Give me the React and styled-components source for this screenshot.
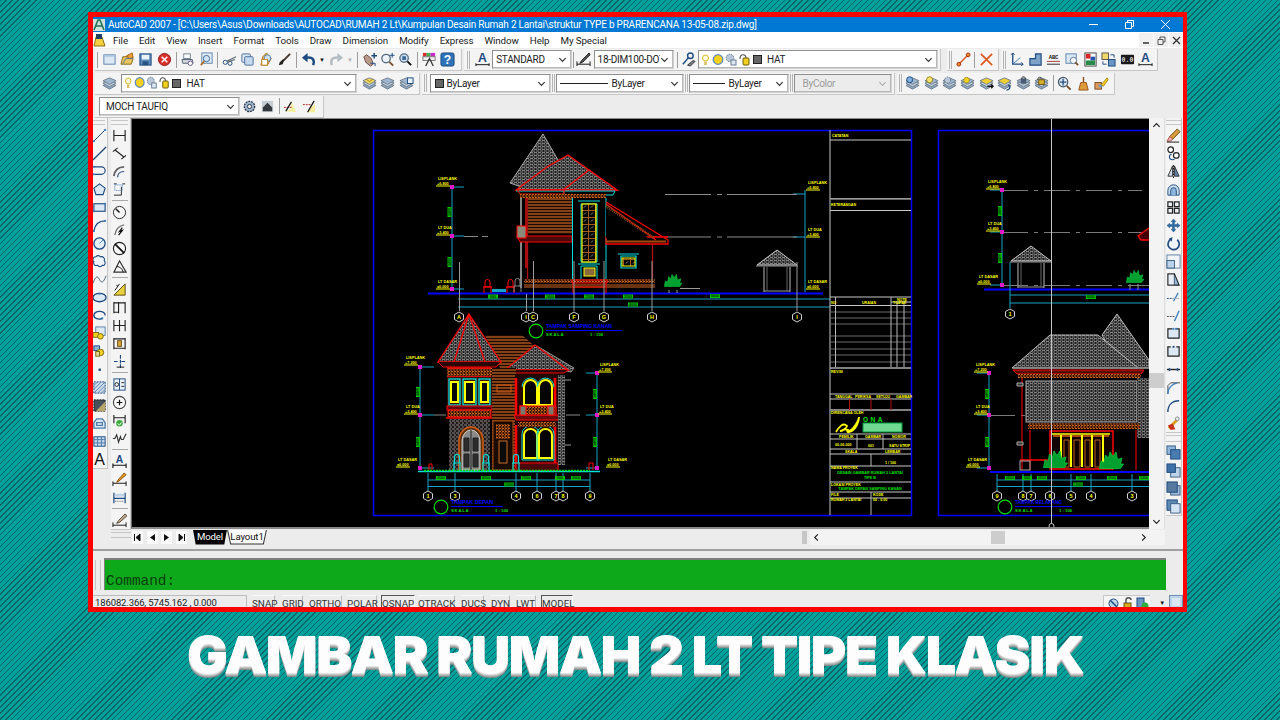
import React from 'react';
import styled, { createGlobalStyle } from 'styled-components';

const GlobalStyle = createGlobalStyle`
  html, body {
    margin: 0;
    padding: 0;
    width: 1280px;
    height: 720px;
    overflow: hidden;
    font-family: Roboto, "Liberation Sans", sans-serif;
  }
  #root {
    width: 1280px;
    height: 720px;
  }
`;

const Page = styled.div`
  box-sizing: border-box;
  width: 1280px;
  height: 720px;
  padding: 12px 0 0 88px;
  background-color: #00a19b;
  background-image: repeating-linear-gradient(
    135deg,
    #0f6568 0,
    #0f6568 1px,
    #00a19b 1px,
    #00a19b 4.2px
  );
  overflow: hidden;
`;
const Window = styled.div`
  box-sizing: border-box;
  width: 1099px;
  height: 600px;
  border: solid #ff0000;
  border-width: 5px 4px 5px 5px;
  background: #ececec;
  display: flex;
  flex-direction: column;
  overflow: hidden;
`;
const Headline = styled.h1`
  margin: 13px 0 0 99px;
  font-family: Inter, "Liberation Sans", sans-serif;
  font-size: 51px;
  line-height: 60px;
  font-weight: 900;
  letter-spacing: -1.5px;
  color: #fdfdfd;
  white-space: nowrap;
  transform: scaleX(1.065);
  transform-origin: left center;
  text-shadow: 0 1px 0 #e2e2e2, 0 2px 0 #c4c4c4, 0 3px 0 #a8a8a8, 0 4px 1px #8e8e8e;
`;

const TitleBar = styled.div`
  height: 15px;
  flex: none;
  background: #0078d4;
  display: flex;
  align-items: center;
  color: #fff;
  font-size: 10px;
  letter-spacing: -0.22px;
  white-space: nowrap;
`;
const TitleText = styled.span`
  margin-left: 3px;
  flex: 1;
`;
const WinControls = styled.div`
  display: flex;
  width: 95px;
  justify-content: space-between;
  padding-right: 12px;
  box-sizing: border-box;
`;
const MenuBar = styled.div`
  height: 16px;
  flex: none;
  background: #fff;
  display: flex;
  align-items: center;
  font-size: 9.8px;
  letter-spacing: -0.1px;
  color: #1a1a1a;
`;
const MenuItems = styled.div`
  display: flex;
  gap: 11px;
  margin-left: 7px;
  flex: 1;
`;
const MdiButtons = styled.div`
  display: flex;
  gap: 1px;
`;
const MdiButton = styled.div`
  width: 14px;
  height: 14px;
  background: #f0f0f0;
  display: flex;
  align-items: center;
  justify-content: center;
`;

const ToolRow = styled.div`
  height: ${(p) => p.$h ?? 23}px;
  flex: none;
  display: flex;
  align-items: center;
  gap: 2px;
  padding-left: 2px;
`;
const ToolGroup = styled.div`
  height: 21px;
  display: flex;
  align-items: center;
  padding: 0 ${(p) => p.$pr ?? 4}px 0 ${(p) => p.$pl ?? 4}px;
  background: #f4f4f4;
  border-right: 1px solid #c6c6c6;
  border-bottom: 1px solid #c6c6c6;
  margin-left: ${(p) => p.$ml ?? 0}px;
`;
const Handle = styled.div`
  width: 3px;
  height: 18px;
  margin: 0 ${(p) => p.$m ?? 2}px;
  flex: none;
  border-left: 1px solid #b4b4b4;
  border-right: 1px solid #b4b4b4;
  box-sizing: border-box;
`;
const Slot = styled.div`
  width: 18.4px;
  height: 18px;
  flex: none;
  display: flex;
  align-items: center;
  justify-content: center;
`;
const Glyph = styled.svg`
  width: ${(p) => p.$w ?? p.$s ?? 15}px;
  height: ${(p) => p.$s ?? 15}px;
  display: block;
  flex: none;
`;
const Sep = styled.div`
  width: 1px;
  height: 16px;
  margin: 0 ${(p) => p.$m ?? 2}px;
  flex: none;
  background: #9c9c9c;
`;
const DropSlot = styled.div`
  width: 9.6px;
  height: 18px;
  flex: none;
  display: flex;
  align-items: center;
  justify-content: center;
  color: ${(p) => (p.$off ? '#b0b0b0' : '#111')};
  font-size: 6px;
`;
const ComboBox = styled.div`
  box-sizing: border-box;
  width: ${(p) => p.$w}px;
  height: 19px;
  flex: none;
  margin: 0 ${(p) => p.$m ?? 0}px;
  display: flex;
  align-items: center;
  padding: 0 4px 0 3px;
  font-size: 10px;
  letter-spacing: -0.3px;
  color: ${(p) => (p.$off ? '#9a9a9a' : '#222')};
  background: ${(p) => (p.$off ? '#ececec' : '#fff')};
  border: 1px solid #d2d2d2;
  border-top: 1px solid #8e8e8e;
  border-left: 1px solid #8e8e8e;
  box-shadow: inset -1px -1px 0 #b8b8b8;
  overflow: hidden;
  white-space: nowrap;
`;
const ComboLabel = styled.span`
  flex: 1;
  overflow: hidden;
  margin-left: ${(p) => p.$ml ?? 0}px;
`;
const LineSample = styled.span`
  display: block;
  width: ${(p) => p.$w}px;
  height: 1px;
  flex: none;
  margin-right: 4px;
  background: #222;
`;
const Swatch = styled.span`
  width: 7px;
  height: 7px;
  flex: none;
  margin: 0 3px 0 1px;
  background: #666;
  border: 1px solid #222;
`;

const Workspace = styled.div`
  height: 428px;
  flex: none;
  display: flex;
  align-items: stretch;
`;
const DockColumn = styled.div`
  width: ${(p) => p.$w}px;
  flex: none;
  display: flex;
  flex-direction: column;
  margin-right: ${(p) => p.$mr ?? 0}px;
  margin-left: ${(p) => p.$ml ?? 0}px;
`;
const VertGroup = styled.div`
  display: flex;
  flex-direction: column;
  align-items: center;
  box-sizing: border-box;
  padding-right: ${(p) => p.$pr ?? 0}px;
  background: #f4f4f4;
  border-right: 1px solid #c6c6c6;
  border-bottom: 1px solid #c6c6c6;
`;
const VertHandle = styled.div`
  width: 100%;
  height: ${(p) => p.$h ?? 7}px;
  flex: none;
  box-sizing: border-box;
  margin-top: 1px;
  border-top: 1px solid #b4b4b4;
  border-bottom: 1px solid #b4b4b4;
  transform: scaleY(0.7);
`;
const VertSlot = styled.div`
  height: 18px;
  flex: none;
  display: flex;
  align-items: center;
  justify-content: center;
`;
const VertSep = styled.div`
  width: 16px;
  height: 1px;
  margin: 2px 0;
  flex: none;
  background: #a8a8a8;
`;
const Center = styled.div`
  width: 1034px;
  flex: none;
  display: flex;
  flex-direction: column;
`;
const ViewRow = styled.div`
  height: 411px;
  flex: none;
  display: flex;
`;
const Canvas = styled.div`
  width: 1018px;
  flex: none;
  box-sizing: border-box;
  background: #000;
  border-top: 1px solid #8a8a8a;
  border-bottom: 2px solid #8a8a8a;
  border-left: 1px solid #6a6a6a;
  overflow: hidden;
`;
const DrawingSvg = styled.svg`
  display: block;
`;
const VScroll = styled.div`
  width: 16px;
  flex: none;
  background: #f3f3f3;
  display: flex;
  flex-direction: column;
  align-items: center;
  justify-content: space-between;
  padding: 3px 0;
  box-sizing: border-box;
  border-right: 1px solid #dedede;
`;
const VThumbWrap = styled.div`
  flex: 1;
  width: 100%;
  display: flex;
  flex-direction: column;
  padding-top: 243px;
`;
const VThumb = styled.div`
  width: 100%;
  height: 15px;
  background: #cdcdcd;
`;
const TabRow = styled.div`
  height: 16px;
  flex: none;
  display: flex;
  align-items: center;
  font-size: 10px;
  padding-left: 1px;
`;
const NavBtn = styled.div`
  width: 11px;
  height: 13px;
  margin-right: 3.5px;
  flex: none;
  display: flex;
  align-items: center;
  justify-content: center;
  background: #fbfbfb;
`;
const Tab = styled.div`
  height: 15px;
  width: ${(p) => p.$w}px;
  margin-left: ${(p) => p.$ml ?? 0}px;
  flex: none;
  display: flex;
  justify-content: center;
  background: ${(p) => (p.$on ? '#000' : '#333')};
  clip-path: polygon(0 0, 100% 0, 92% 100%, 8% 100%);
`;
const TabFace = styled.div`
  flex: 1;
  height: 14px;
  margin: 0 1px;
  display: flex;
  align-items: center;
  justify-content: center;
  font-size: 9.6px;
  letter-spacing: -0.1px;
  background: ${(p) => (p.$on ? '#000' : '#fafafa')};
  color: ${(p) => (p.$on ? '#fff' : '#111')};
  clip-path: polygon(0 0, 100% 0, 92% 100%, 8% 100%);
`;
const HScroll = styled.div`
  margin-left: auto;
  width: 363px;
  height: 15px;
  display: flex;
  align-items: center;
  flex: none;
`;
const HGrip = styled.div`
  width: 5px;
  height: 13px;
  flex: none;
  margin-right: 3px;
  background: #c6c6c6;
`;
const HTrack = styled.div`
  flex: 1;
  height: 15px;
  background: #f3f3f3;
  display: flex;
  align-items: center;
  padding: 0 17px 0 2px;
`;
const HThumb = styled.div`
  width: 14px;
  height: 13px;
  margin: 0 auto 0 170px;
  background: #cdcdcd;
`;
const CommandPanel = styled.div`
  flex: none;
  height: 45px;
  margin-top: 3px;
  box-sizing: border-box;
  border-top: 2px solid #a0a0a0;
  display: flex;
  align-items: flex-end;
  padding: 0 17px 4px 2px;
`;
const CommandGrip = styled.div`
  width: 4px;
  height: 30px;
  flex: none;
  margin-right: 3px;
  border-left: 1px solid #c4c4c4;
  border-right: 1px solid #c4c4c4;
`;
const CommandArea = styled.div`
  flex: 1;
  height: 32px;
  box-sizing: border-box;
  background-color: #0ea91b;
  border-top: 2px solid #7f7f7f;
  border-left: 1px solid #7f7f7f;
  padding-left: 1px;
  display: flex;
  align-items: flex-end;
  font-family: "Liberation Mono", monospace;
  font-size: 14.4px;
  line-height: 17px;
  color: #0a3d10;
`;
const StatusBar = styled.div`
  height: 13px;
  flex: none;
  display: flex;
  align-items: flex-start;
  padding-top: 1px;
  box-sizing: border-box;
  font-size: 9.8px;
  color: #222;
  white-space: nowrap;
  overflow: hidden;
`;
const Coords = styled.div`
  width: 154px;
  height: 14px;
  flex: none;
  box-sizing: border-box;
  padding-left: 2px;
  margin-right: 5px;
  font-size: 9.5px;
  letter-spacing: -0.12px;
  line-height: 14px;
  border-right: 1px solid #bcbcbc;
  border-top: 1px solid #bcbcbc;
`;
const StatusBtn = styled.div`
  width: ${(p) => p.$w}px;
  margin-right: ${(p) => p.$mr}px;
  height: 14px;
  flex: none;
  text-align: center;
  line-height: 15px;
  box-sizing: border-box;
  color: #333;
  border-top: ${(p) => (p.$on ? '1px solid #555' : '1px solid #f8f8f8')};
  border-left: ${(p) => (p.$on ? '1px solid #555' : 'none')};
  border-right: 1px solid ${(p) => (p.$on ? '#fff' : '#bcbcbc')};
`;
const Tray = styled.div`
  margin-left: auto;
  display: flex;
  align-items: center;
  gap: 2px;
  height: 14px;
`;
const TrayIcons = styled.div`
  display: flex;
  gap: 1.5px;
  padding: 1px 1px 0 3px;
  background: #f4f4f4;
  border-top: 1px solid #c6c6c6;
  border-left: 1px solid #c6c6c6;
  margin-right: 5px;
`;

// colours used all over the small toolbar glyphs
const N = '#1d4a80';
const B = '#3a7fc0';
const G = '#6f7f8e';

const dot = (x, y, c = B) => <rect x={x} y={y} width="2" height="2" fill={c} />;
const stack = (top = '#9fb6cf') => (
  <>
    <path d="M1 10l7-3 7 3-7 4z" fill="#8ea6bf" stroke={G} />
    <path d="M1 7.5l7-3 7 3-7 4z" fill="#c3d2e0" stroke={G} />
    <path d="M1 5l7-3 7 3-7 4z" fill={top} stroke={G} />
  </>
);

const icons = {
  newdoc: <><rect x="2" y="3" width="12" height="10" fill="#dbe8f4" stroke="#5b82ad" /><path d="M2 3h12v2H2z" fill="#a9c4de" /></>,
  open: <><path d="M1 13l2-8h5l1 2h5l-2 6z" fill="#e8c660" stroke="#8a6a1a" /><path d="M7 4l6-3 1 5-4 1z" fill="#e9a23a" stroke="#a55c10" /><path d="M3 13l3-6h8" fill="none" stroke="#5d7ca0" /></>,
  save: <><rect x="2" y="2" width="12" height="12" fill="#5b88b8" stroke={N} /><rect x="4" y="3" width="8" height="5" fill="#eaf2fa" /><rect x="5" y="10" width="6" height="4" fill="#26527f" /></>,
  plotx: <><circle cx="8" cy="8" r="6.5" fill="#d8302a" stroke="#8c1a18" /><path d="M5 5l6 6M11 5l-6 6" stroke="#fff" strokeWidth="1.6" /></>,
  print: <><rect x="4" y="2" width="7" height="5" fill="#fff" stroke={G} /><path d="M2 8h11l1 4H3z" fill="#cfd6de" stroke="#52606e" /><circle cx="11" cy="12" r="2.4" fill="#fff" stroke="#6a5a8a" /></>,
  preview: <><rect x="3" y="1" width="11" height="11" fill="#e6eef7" stroke="#5b82ad" /><circle cx="8" cy="7" r="3.4" fill="#cfe3f6" stroke="#40688f" /><path d="M5.6 9.6L2 14" stroke="#b2702b" strokeWidth="2" /></>,
  cut: <><circle cx="3.5" cy="11" r="2.2" fill="none" stroke={N} /><circle cx="8.5" cy="12" r="2.2" fill="none" stroke={N} /><path d="M5 10L15 5M7 10.5L14 8" stroke="#66707a" strokeWidth="1.3" /></>,
  copy: <><rect x="2" y="2" width="9" height="9" rx="1" fill="#dbe8f4" stroke="#4a6f99" /><rect x="5" y="5" width="9" height="9" rx="1" fill="#c6daef" stroke="#4a6f99" /></>,
  paste: <><path d="M8 1l5 6-4 7H2l2-9z" fill="#f0c060" stroke="#a4661a" /><circle cx="9" cy="6.5" r="3.5" fill="#cfe0f0" stroke="#5a7e9e" /><rect x="3" y="8" width="6" height="6" fill="#fff" stroke="#c68b2a" /></>,
  brush: <><path d="M14 2L7 9" stroke="#40342a" strokeWidth="2" /><path d="M8 8l-2 5-4 1 1-3 3-3z" fill="#23201c" /></>,
  undo: <><path d="M13 14c2-6-1-9-7-8" fill="none" stroke={N} strokeWidth="2.6" /><path d="M7 1L1 6l6 5z" fill={N} /></>,
  redo: <><path d="M3 14C1 8 4 5 10 6" fill="none" stroke="#b4bcc4" strokeWidth="2.6" /><path d="M9 1l6 5-6 5z" fill="#b4bcc4" /></>,
  pan: <><path d="M2 5l3-2 5 4 2 6-3 2-5-4z" fill="#b99b8b" stroke="#6a4a44" /><path d="M13 1v6M10 4h6" stroke={N} strokeWidth="1.6" /><path d="M9 12h5v3" stroke={N} fill="none" /></>,
  zoomrt: <><circle cx="6.5" cy="7" r="4.5" fill="#eef4fb" stroke="#556b82" strokeWidth="1.4" /><path d="M10 10.5l4 4" stroke="#7a5230" strokeWidth="2" /><path d="M13 1v5M10.5 3.5h5" stroke={N} /></>,
  zoomwin: <><circle cx="6.5" cy="6.5" r="4.5" fill="#cfe0f0" stroke="#556b82" strokeWidth="1.4" /><rect x="4.5" y="4.5" width="4" height="4" fill="#3e6a99" /><path d="M10 10l4 4" stroke="#111" strokeWidth="2" /></>,
  props: <><rect x="1" y="1" width="4" height="4" fill="#d92b2b" /><rect x="5" y="1" width="4" height="4" fill="#3bb24a" /><rect x="9" y="1" width="5" height="4" fill="#c52fc5" /><rect x="1" y="5" width="13" height="4" fill="#eee" stroke="#777" /><path d="M4 15L8 7l4 8" fill="none" stroke="#333" strokeWidth="1.4" /></>,
  help: <><rect x="1" y="1" width="14" height="14" rx="2" fill="#2d73b8" stroke={N} /><text x="8" y="13" fontSize="13" fontWeight="700" fontFamily="Liberation Sans" textAnchor="middle" fill="#fff">?</text></>,
  textA: <><text x="8" y="11" fontSize="13" fontWeight="700" fontFamily="Liberation Sans" textAnchor="middle" fill={N}>A</text><path d="M1 12v3M15 12v3M1 13.5h14" stroke="#111" /></>,
  dimStyle: <><path d="M1 10v5M15 10v5M1 13h14" stroke="#111" /><path d="M14 1L6 9l-2 3 3-1 8-8z" fill="#555" stroke="#222" /></>,
  layerPrev: <><circle cx="10" cy="4" r="3" fill="none" stroke={N} strokeWidth="1.5" /><path d="M8 6l-6 7" stroke={N} strokeWidth="1.6" /><path d="M7 14l6-5 2 1-5 5z" fill="#7a8590" stroke="#333" /></>,
  redLine: <><path d="M3 13L13 3" stroke="#d2521e" strokeWidth="1.4" /><circle cx="3" cy="13" r="2" fill="#e0902a" stroke="#b02a10" /><circle cx="13" cy="3" r="2" fill="#e0902a" stroke="#b02a10" /></>,
  redX: <path d="M2 2l12 12M14 2L2 14" stroke="#e0581e" strokeWidth="1.8" />,
  ucs: <><path d="M4 1v12h11" fill="none" stroke={N} strokeWidth="1.4" /><path d="M4 13L12 6" stroke={B} /><path d="M2 3l2-2 2 2M13 11l2 2-2 2" fill="none" stroke={N} /></>,
  stair: <path d="M2 14V7h6V2h6v12z" fill="#7ea3c8" stroke={N} strokeWidth="1.2" />,
  abc: <><text x="8" y="7" fontSize="6" fontWeight="700" fontFamily="Liberation Mono" textAnchor="middle" fill="#222" letterSpacing="-0.2">ABC</text><path d="M1 10h14" stroke="#a33" /><path d="M1 13h14" stroke="#222" /></>,
  zoomDoc: <><rect x="1" y="2" width="11" height="10" fill="#dbe8f4" stroke="#5b82ad" /><circle cx="9" cy="9" r="3.4" fill="#f4f8fc" stroke="#5b7890" /><path d="M11 11l3 3" stroke="#7a5230" strokeWidth="2" /></>,
  colorDoc: <><rect x="2" y="1" width="12" height="14" fill="#fff" stroke="#444" /><rect x="3" y="2" width="5" height="5" fill="#d22" /><rect x="8" y="5" width="5" height="4" fill="#25a" /><rect x="3" y="9" width="10" height="5" fill="#2a8a4a" /></>,
  transfer: <><rect x="1" y="1" width="7" height="7" fill="#f2d866" stroke="#555" /><rect x="8" y="8" width="7" height="7" fill="#6b96c4" stroke={N} /><path d="M10 3h4v3M6 13H2v-3" fill="none" stroke={N} /></>,
  tape: <><rect x="1" y="3" width="14" height="10" rx="1" fill="#1a1a1a" /><text x="8" y="11" fontSize="7" fontWeight="700" fontFamily="Liberation Mono" textAnchor="middle" fill="#ddd">0.0</text></>,
  layers: stack(),
  layerY: <>{stack('#f0d860')}<path d="M4 3l4 3 4-3" stroke="#a8861a" fill="none" /></>,
  layerState: <>{stack()}<rect x="9" y="2" width="6" height="6" fill="#e8f0f8" stroke={N} /></>,
  layerBall: <>{stack()}<circle cx="5" cy="4" r="3.2" fill="#7fb0e0" stroke={N} /></>,
  layerBulb: <>{stack()}<circle cx="6" cy="4" r="3.2" fill="#f4e36a" stroke="#9a8420" /></>,
  layerGear: <>{stack()}<circle cx="6" cy="4.4" r="3.2" fill="#b9c8d8" stroke="#5d6f82" strokeDasharray="1.5 .8" /></>,
  layerSun: <>{stack()}<circle cx="7" cy="4.4" r="3" fill="#f2d020" stroke="#8a7a10" strokeDasharray="1.5 .8" /></>,
  layerFwd: <>{stack('#f0d030')}<path d="M9 11h6M13 9l2 2-2 2" fill="none" stroke="#111" strokeWidth="1.4" /></>,
  layerBack: <>{stack('#f0d030')}<path d="M10 15c4 0 5-4 2-5" fill="none" stroke={N} strokeWidth="1.4" /></>,
  layerLock: <>{stack()}<rect x="5" y="3" width="6" height="5" fill="#4a5a72" /><path d="M6 3c0-3 4-3 4 0" fill="none" stroke="#333" /></>,
  layerOpen: <>{stack()}<rect x="5" y="4" width="6" height="5" fill="#d8b12c" stroke="#6a5210" /><path d="M4 4c0-4 4-3 4-1" fill="none" stroke="#333" /></>,
  zoomPan: <><circle cx="6.5" cy="6.5" r="5" fill="#dde8f2" stroke="#44566a" strokeWidth="1.3" /><path d="M6.5 3v7M3 6.5h7" stroke={N} strokeWidth="1.3" /><path d="M10.5 10.5l4 4" stroke="#7a4a20" strokeWidth="2" /></>,
  broom: <><path d="M8 1v6" stroke="#8a4a14" strokeWidth="1.5" /><path d="M5 7h6l2 8H3z" fill="#dd9a3a" stroke="#96541a" /></>,
  match: <><rect x="1" y="7" width="7" height="7" fill="#e09a5a" stroke="#7a4a20" /><rect x="5" y="9" width="4" height="3" fill="#6b96c4" /><path d="M8 9l6-7 1 2-5 7z" fill="#f2d020" stroke="#b08a10" /></>,
  regenGear: <><circle cx="8" cy="8" r="5.5" fill="#9fb3c8" stroke="#273a50" strokeWidth="1.4" strokeDasharray="2 1" /><circle cx="8" cy="8" r="2.2" fill="#f2f2f2" stroke="#273a50" /></>,
  house: <><rect x="2" y="2" width="12" height="12" fill="#c7ccd2" /><path d="M3 9l5-5 5 5v4H3z" fill="#33383e" /></>,
  shade1: <><path d="M2 13l6-2 1-8 5 11z" fill="#f4ee9c" /><path d="M1 9h8" stroke="#b02020" strokeDasharray="2 1" /><path d="M3 13L9 3" stroke="#111" strokeWidth="1.3" /></>,
  shade2: <><path d="M5 14h9V5z" fill="#f4ee9c" /><path d="M1 6h8" stroke="#b02020" strokeDasharray="2 1" /><path d="M6 14L13 2" stroke="#111" strokeWidth="1.3" /></>,

  line: <><path d="M2 14L14 2" stroke={N} />{dot(1, 13)}{dot(13, 1)}</>,
  xline: <path d="M1 15L15 1" stroke={N} strokeWidth="1.4" />,
  pline: <><path d="M2 3h8a3.5 3.5 0 010 8H3" fill="none" stroke={N} strokeWidth="1.2" />{dot(1, 2)}{dot(1, 10)}</>,
  polygon: <path d="M8 2l6 4.5-2.2 7H4.2L2 6.5z" fill="#dce8f4" stroke={N} strokeWidth="1.2" />,
  rect: <><rect x="2" y="4" width="12" height="8" fill="#dce8f4" stroke={N} strokeWidth="1.2" />{dot(13, 3)}{dot(1, 11)}</>,
  arc: <><path d="M2 14C3 7 7 3 14 3" fill="none" stroke={N} strokeWidth="1.3" />{dot(1, 13)}{dot(13, 2)}</>,
  circle: <><circle cx="8" cy="8" r="6" fill="#e6eff8" stroke={N} strokeWidth="1.4" /><path d="M8 8l4-4" stroke={B} /></>,
  cloud: <path d="M4 3c2-2 4-1 5 0 3-1 5 2 4 4 2 2 1 6-2 5-1 2-4 2-5 0-3 1-5-1-4-4-2-1-1-5 2-5z" fill="#eef3f9" stroke={N} strokeWidth="1.1" />,
  spline: <path d="M1 12c3-8 5-8 7-4s4 4 7-4" fill="none" stroke="#40505f" />,
  ellipse: <><ellipse cx="8" cy="8" rx="7" ry="4.5" fill="#dce8f4" stroke={N} strokeWidth="1.4" />{dot(7, 3)}</>,
  ellArc: <><path d="M14 8c0-6-12-6-12 0 0 3 5 5 9 3" fill="none" stroke={N} strokeWidth="1.4" />{dot(10, 10)}</>,
  insert: <><rect x="4" y="1" width="10" height="9" fill="#dce8f4" stroke="#5b82ad" /><rect x="1" y="7" width="6" height="5" fill="#f2d020" stroke="#7a6a10" /><circle cx="9" cy="11" r="3" fill="#f2d020" stroke="#7a6a10" /></>,
  block: <><rect x="2" y="2" width="6" height="5" fill="#8fb3d6" stroke={N} /><circle cx="9" cy="9" r="3.5" fill="#f2d020" stroke="#7a6a10" /><rect x="4" y="8" width="4" height="5" fill="#e8d890" stroke="#7a6a10" /></>,
  point: <rect x="7" y="7" width="2.5" height="2.5" fill={N} />,
  hatch: <><rect x="2" y="2" width="12" height="12" fill="#cfdcea" stroke={N} strokeDasharray="2 1" /><path d="M2 6l4-4M2 10l8-8M2 14L14 2M6 14l8-8M10 14l4-4" stroke="#5b82ad" /></>,
  gradient: <><rect x="2" y="2" width="12" height="12" fill="#45505c" stroke="#111" strokeDasharray="2 1" /><path d="M4 14L14 4v10z" fill="#b5a66a" /></>,
  region: <path d="M2 13V7l3-4h6l3 4v6zM5 7h6v3H5z" fill="#dce8f4" stroke="#4d7eaa" strokeWidth="1.4" fillRule="evenodd" />,
  table: <><rect x="2" y="3" width="12" height="10" fill="#c9daec" stroke={N} /><path d="M2 6h12M2 9.5h12M6 3v10M10 3v10" stroke="#4a78a8" /></>,
  mtext: <text x="8" y="14" fontSize="17" fontFamily="Liberation Sans" textAnchor="middle" fill="#111">A</text>,

  dimLin: <path d="M2 2v12M14 2v12M2 8h12" stroke="#222" strokeWidth="1.2" />,
  dimAli: <path d="M1 6l5-4M10 14l5-4M3 4l10 8" stroke="#222" strokeWidth="1.2" />,
  dimArc: <><path d="M2 13C3 6 7 3 13 3" fill="none" stroke="#666" strokeWidth="2" /><path d="M6 14c0-3 2-6 7-6" fill="none" stroke={N} strokeWidth="1.2" /></>,
  dimOrd: <><path d="M2 2h3M11 2h3M2 14h8M10 5v9" stroke="#222" /><rect x="3" y="3" width="8" height="6" fill="none" stroke={B} strokeDasharray="1 1" /></>,
  dimRad: <><circle cx="8" cy="8" r="6.5" fill="#f6f6f6" stroke="#222" /><path d="M8 8l-4-4" stroke="#111" strokeWidth="1.5" /></>,
  dimJog: <><path d="M3 13C4 7 7 3 13 2" fill="none" stroke="#777" strokeWidth="1.4" /><path d="M11 5L8 9l3-1-4 5" fill="none" stroke="#111" strokeWidth="1.3" /></>,
  dimDia: <><circle cx="8" cy="8" r="6.5" fill="#f6f6f6" stroke="#222" strokeWidth="1.2" /><path d="M3 3l10 10" stroke="#111" strokeWidth="1.8" /></>,
  dimAng: <><path d="M2 14h13L8 2z" fill="none" stroke="#333" strokeWidth="1.2" /><path d="M5 8c3 0 6 2 7 6" fill="none" stroke="#111" /></>,
  dimQuick: <><path d="M14 2L2 14h12z" fill="#e8d040" stroke="#554a10" /><path d="M5 3l1 2M8 2L3 9" stroke="#111" /></>,
  dimBase: <path d="M2 2v12M7 2v12M14 2v12M2 3h12M2 13h5" stroke="#222" strokeWidth="1.2" />,
  dimCont: <path d="M2 2v12M8 2v12M14 2v12M2 8h12" stroke="#222" strokeWidth="1.2" />,
  dimSpace: <><path d="M2 2v12M14 2v12M2 3h12M2 13h12" stroke="#222" strokeWidth="1.2" /><rect x="6" y="5" width="4" height="6" fill="#d8a63a" stroke="#6a4a10" /></>,
  dimBreak: <><path d="M2 8h4M10 8h4M9 1v14" stroke={N} strokeWidth="1.2" strokeDasharray="4 1" /><path d="M5 14h8" stroke="#111" /></>,
  dimTol: <><rect x="2" y="2" width="12" height="12" fill="#e8f0f8" stroke={N} /><path d="M8 2v12" stroke={N} /><circle cx="5" cy="8" r="2" fill="none" stroke="#222" /><path d="M10 6h3M10 10h3" stroke="#222" /></>,
  dimCen: <><circle cx="8" cy="8" r="6.5" fill="#f8f8f8" stroke="#444" strokeWidth="1.2" /><path d="M5 8h6M8 5v6" stroke="#111" strokeWidth="1.3" /></>,
  dimChk: <><path d="M2 2v9M14 2v9M2 5h12" stroke="#222" strokeWidth="1.2" /><circle cx="8" cy="11" r="3.5" fill="#3caa3c" /><path d="M6 11l2 2 2-3" stroke="#fff" fill="none" /></>,
  dimZig: <path d="M1 8h2l2-4 2 8 2-6 1 3h2l3-6" fill="none" stroke="#333" strokeWidth="1.2" />,
  dimTxt: <><text x="8" y="10" fontSize="11" fontWeight="700" fontFamily="Liberation Sans" textAnchor="middle" fill={N}>A</text><path d="M1 10v5M15 10v5M1 12h14" stroke="#111" strokeWidth="1.2" /></>,
  dimPen: <><path d="M1 10v5M15 10v5M1 12h14" stroke="#111" /><path d="M13 1L6 9l-1 2 2-1 8-7z" fill="#e8a01c" stroke="#8a4a10" /></>,
  dimUpd: <><path d="M2 3v11M14 3v11M2 9h12" stroke={N} strokeWidth="1.3" /><rect x="3" y="4" width="10" height="3" fill="#bcd3ea" /><path d="M3 12h9" stroke="#555" strokeDasharray="1 1" /></>,
  dimEdit: <><path d="M1 10v5M15 10v5M1 13h14" stroke="#111" /><path d="M14 1L7 8l-2 3 3-1 8-7z" fill="#c0b090" stroke="#554030" /></>,

  erase: <><path d="M12 1l3 3-8 8-4 1 1-4z" fill="#d89a3a" stroke="#6a4a10" /><path d="M4 9l3 3-2 2-4 0z" fill="#f3b0b0" stroke="#a55" /><path d="M1 15h13" stroke="#111" /></>,
  copyObj: <><circle cx="5" cy="4" r="3" fill="#fff" stroke="#222" strokeWidth="1.3" /><circle cx="11" cy="10" r="3" fill="#fff" stroke="#222" strokeWidth="1.3" /><path d="M6 9c-2 0-3 2-2 4s4 2 5 1" fill="none" stroke={N} strokeWidth="1.2" /></>,
  mirror: <><path d="M7 2L2 13h5z" fill="#cfdcea" stroke="#333" /><path d="M9 2l5 11H9z" fill="#5b82ad" stroke="#333" /><path d="M8 1v14" stroke="#111" strokeDasharray="2 1" /></>,
  offset: <><path d="M2 14V9a6 6 0 0112 0v5z" fill="#cfe0f0" stroke={N} /><path d="M5 14V9a3 3 0 016 0v5" fill="#8fb6dc" stroke={N} /></>,
  array: <path d="M2 2h5v5H2zM9 2h5v5H9zM2 9h5v5H2zM9 9h5v5H9z" fill="#eef3f8" stroke="#222" strokeWidth="1.3" />,
  move: <path d="M8 1l2.5 3H9v3h3V5.5L15 8l-3 2.5V9H9v3h1.5L8 15l-2.5-3H7V9H4v1.5L1 8l3-2.5V7h3V4H5.5z" fill="#2f6ea8" stroke={N} strokeWidth=".5" />,
  rotate: <><path d="M12 4a6 6 0 11-6-1" fill="#eef4fa" stroke={N} strokeWidth="1.8" /><path d="M7 1L3 3l3 3z" fill={N} /></>,
  scale: <><rect x="1" y="1" width="14" height="14" fill="#f0f4f8" stroke="#5a7e9e" /><rect x="1" y="7" width="8" height="8" fill="#bcd3ea" stroke="#3a5e80" /></>,
  stretch: <><rect x="2" y="2" width="7" height="12" fill="#e6eef6" stroke="#222" strokeWidth="1.2" /><path d="M9 2l5 12H9" fill="#8fb6dc" stroke="#222" strokeWidth="1.2" /></>,
  trim: <><path d="M1 9h7" stroke={N} strokeDasharray="2 1" /><path d="M8 12l5-9" stroke={B} strokeWidth="1.4" /><path d="M9 9h5" stroke="#aaa" /></>,
  extend: <><path d="M1 9h8" stroke="#444" strokeDasharray="2 1" /><path d="M9 14l5-11" stroke={B} strokeWidth="1.4" /></>,
  breakPt: <><rect x="2" y="3" width="12" height="10" fill="#dce8f4" /><path d="M2 13V3h5M10 3h4v10H2" fill="none" stroke="#222" strokeWidth="1.3" />{dot(7, 2)}{dot(10, 2)}</>,
  breakOne: <><rect x="2" y="3" width="12" height="10" fill="#dce8f4" /><path d="M5 3H2v10h12V3h-3" fill="none" stroke="#222" strokeWidth="1.3" />{dot(7, 2, N)}</>,
  join: <><path d="M1 8h14" stroke="#222" strokeWidth="1.5" /><path d="M3 6l3 2-3 2zM13 6l-3 2 3 2z" fill={N} /></>,
  chamfer: <><path d="M2 15V6l3-3h10" fill="none" stroke="#444" /><path d="M2 15C2 8 7 4 12 3" fill="none" stroke={B} strokeWidth="1.3" /></>,
  fillet: <path d="M2 15C2 8 6 3 14 3" fill="none" stroke={N} strokeWidth="1.5" />,
  explode: <><path d="M3 13l9-9" stroke="#d9a020" strokeWidth="3" /><path d="M2 10l3 5 5-1-3-6z" fill="#c8321e" /><circle cx="12" cy="3" r="2" fill="#eee" stroke="#888" /></>,
  order1: <><rect x="1" y="1" width="9" height="9" fill="#8fb6dc" stroke="#3a5e80" /><rect x="5" y="5" width="10" height="10" fill="#4a7cb0" stroke={N} /></>,
  order2: <><rect x="5" y="5" width="10" height="10" fill="#bcd3ea" stroke="#3a5e80" /><rect x="1" y="1" width="9" height="9" fill="#3f72a8" stroke={N} /></>,
  order3: <><rect x="5" y="5" width="10" height="10" fill="#9fbcd8" stroke="#3a5e80" /><rect x="1" y="1" width="11" height="11" fill="#56799e" stroke={N} /></>,
  order4: <><rect x="1" y="1" width="11" height="11" fill="#5c88b4" stroke={N} /><rect x="5" y="5" width="10" height="10" fill="#d5e4f2" stroke="#3a5e80" /></>,
};

const Tool = ({ n }) => (
  <Slot>
    <Glyph viewBox="0 0 16 16">{icons[n]}</Glyph>
  </Slot>
);
const Tools = ({ list }) => list.map((n, i) => (n === '|' ? <Sep key={i} /> : <Tool key={i} n={n} />));

const VTools = ({ list }) =>
  list.map((n, i) =>
    n === '|' ? (
      <VertSep key={i} />
    ) : (
      <VertSlot key={i}>
        <Glyph viewBox="0 0 16 16">{icons[n]}</Glyph>
      </VertSlot>
    )
  );

const Chevron = ({ c = '#333', r = 0 }) => (
  <Glyph $s={9} viewBox="0 0 10 10">
    <path d="M1.5 3.5L5 7l3.5-3.5" fill="none" stroke={c} strokeWidth="1.3" transform={`rotate(${r} 5 5)`} />
  </Glyph>
);

const LayerStates = ({ w = 50 }) => (
  <Glyph $w={w} $s={14} viewBox="0 0 50 14" preserveAspectRatio="none">
    <circle cx="3.5" cy="5" r="3" fill="#fffbe0" stroke="#d8b820" />
    <path d="M2.2 8.500h2.600v3.500H2.200z" fill="#d8c060" />
    <circle cx="16" cy="6.500" r="4.800" fill="#f4d020" stroke="#5a8ac0" strokeWidth="1.3" />
    <circle cx="28" cy="5" r="3.800" fill="#b9c8d8" stroke="#6a7f94" strokeDasharray="1.5 .8" />
    <rect x="29" y="7" width="5" height="5" fill="#dde8f2" stroke="#6a7f94" />
    <path d="M38 6c0-6 6-5 6-1" fill="none" stroke="#555" strokeWidth="1.2" />
    <rect x="41" y="5" width="6" height="7" rx="1" fill="#f2d020" stroke="#6a5a10" />
  </Glyph>
);

const Combo = ({ w, m, children, off }) => (
  <ComboBox $w={w} $m={m} $off={off}>
    {children}
    <Chevron c={off ? '#b0b0b0' : '#333'} />
  </ComboBox>
);

// --- the drawing on the canvas, in page coordinates ---
const Yellow = '#ffff00';
const Teal = '#16a3c9';
const Blue = '#0000ff';
const Red = '#ff0000';
const Cyan = '#00dede';
const Lime = '#00e000';

const Bubble = ({ x, y, t }) => (
  <g>
    <polygon
      points={`${x - 4.5},${y - 2.5} ${x},${y - 5} ${x + 4.5},${y - 2.5} ${x + 4.5},${y + 2.5} ${x},${y + 5} ${x - 4.5},${y + 2.5}`}
      fill="#000"
      stroke="#d0d0d0"
    />
    <text x={x} y={y + 2} fontSize="5.5" textAnchor="middle" fill={Yellow} fontFamily="Liberation Sans" fontWeight="700">{t}</text>
  </g>
);
const Level = ({ x, y, a, b, w = 14 }) => (
  <g fill={Yellow} fontSize="3.8" fontFamily="Liberation Sans" fontWeight="700">
    <text x={x + 2} y={y - 6}>{a}</text>
    <text x={x + 1} y={y - 1.5}>{b}</text>
    <path d={`M${x} ${y}h${w}`} stroke={Yellow} strokeWidth="1" />
  </g>
);
const Mag = ({ x, y }) => <rect x={x - 2} y={y - 2} width="4" height="4" fill="#e018c8" />;
const Tag = ({ x, y, t, r }) => (
  <g transform={`translate(${x} ${y})${r ? ' rotate(-90)' : ''}`}>
    <rect x="-5" y="-2" width="10" height="4" fill="#00c000" />
    <text x="0" y="1.4" fontSize="3.6" textAnchor="middle" fill="#003000" fontFamily="Liberation Sans" fontWeight="700">{t}</text>
  </g>
);
const Caption = ({ x, y, t, w, s }) => (
  <g>
    <circle cx={x - 10} cy={y + 3} r="6.8" fill="none" stroke={Lime} strokeWidth="1.2" />
    <text x={x} y={y} fontSize="6" fill={Blue} fontFamily="Liberation Sans" fontWeight="700" textLength={w - 2} lengthAdjust="spacingAndGlyphs">{t}</text>
    <path d={`M${x} ${y + 2.5}h${w + 8}`} stroke={Blue} />
    <text x={x} y={y + 7.5} fontSize="4.2" fill={Lime} fontFamily="Liberation Sans" letterSpacing=".8" fontWeight="700">SKALA</text>
    <text x={x + 44} y={y + 7.5} fontSize="4.2" fill={Lime} fontFamily="Liberation Sans" fontWeight="700">{s}</text>
  </g>
);
const Plant = ({ x, y, s = 1 }) => (
  <g transform={`translate(${x} ${y}) scale(${s})`}>
    <path d="M-7 5l1-5 2 1 1-5 2 2 1-4 2 3 2-3 1 5 3-1-1 4 2 0-2 3z" fill="#00a030" stroke="#00d040" strokeWidth=".5" />
  </g>
);

const Gazebo = ({ x, y }) => (
  <g>
    <polygon points={`${x + 20},${y} ${x + 40},${y + 15} ${x},${y + 15}`} fill="url(#shingle)" stroke="#c8c8c8" />
    <path d={`M${x - 1} ${y + 16}h42M${x + 7} ${y + 17}v25M${x + 33} ${y + 17}v25M${x + 7} ${y + 41}h26`} stroke="#9a9a9a" strokeWidth="1.2" fill="none" />
    <path d={`M${x + 10} ${y + 17}v24M${x + 30} ${y + 17}v24`} stroke="#666" fill="none" />
  </g>
);

const SideView = () => (
  <g>
    <path d="M428 293.5H823" stroke={Blue} strokeWidth="2" />
    <path d="M458 299H830M458 307H830M452 187V290M452 187h12M452 236h12M452 289h12M805 190V292M793 194h12M793 237h12" stroke={Teal} fill="none" />
    <path d="M665 194.5h46m6 0h5m5 0h70M665 237h46m6 0h5m5 0h70M464 236.5h14m4 0h6" stroke="#8a8a8a" fill="none" />
    <Mag x={452} y={187} /><Mag x={452} y={236} /><Mag x={452} y={289} />
    <Level x={436} y={186} a="LISPLANK" b="+6.800" />
    <Level x={436} y={235} a="LT DUA" b="+3.400" />
    <Level x={436} y={289} a="LT DASAR" b="±0.000" />
    <Level x={806} y={190} a="LISPLANK" b="+6.800" />
    <Level x={806} y={237} a="LT DUA" b="+3.400" />
    <Level x={806} y={289} a="LT DASAR" b="±0.000" />
    <Tag x={449.5} y={212} t="3400" r /><Tag x={449.5} y={262} t="3400" r />
    <Tag x={493} y={296.5} t="600" /><Tag x={550} y={296.5} t="1800" /><Tag x={589} y={296.5} t="1500" /><Tag x={628} y={296.5} t="2500" />
    <Tag x={633} y={304.5} t="4000" /><Tag x={715} y={296} t="6000" />
    {/* roof cone and gables */}
    <polygon points="543,134 562,167 530,190 510,183" fill="url(#shingle)" stroke="#a8a8a8" />
    <polygon points="516,190 547,167 568,155 617,190" fill="url(#shingle)" stroke={Red} strokeWidth="1.3" />
    <polygon points="563,190 589,170 617,190" fill="url(#shingle)" stroke={Red} strokeWidth="1.3" />
    <path d="M516 191h47M563 191h52l-2 4h-48z" stroke={Cyan} fill="none" />
    <path d="M517 190h47v4h-44z" fill="none" stroke={Red} />
    <rect x="520" y="194" width="86" height="4" fill="url(#bricks)" />
    {/* wall */}
    <rect x="527" y="198" width="45" height="36" fill="url(#planks)" />
    <rect x="520" y="198" width="2" height="90" fill="#888" />
    <rect x="525" y="198" width="3" height="70" fill="#a01010" />
    <path d="M517 236h55v6h-52z" fill="#4a0808" stroke={Red} />
    <rect x="517" y="226" width="9" height="12" fill="#8a8a7a" stroke={Red} />
    {/* centre bay */}
    <path d="M572.5 198V280M606 198V280" stroke={Cyan} />
    <path d="M578 201h22M581 204h16v58h-16zM578 264h22M581 266h16v14h-16z" fill="none" stroke={Cyan} />
    <rect x="582" y="204" width="14" height="58" fill="url(#glass)" stroke={Yellow} strokeWidth="1.2" />
    <rect x="584" y="268" width="11" height="8" fill="#8a6a3a" stroke={Yellow} />
    {/* shed roof */}
    <path d="M606 202L668 240v4h-62v-7h62M606 204l50 36" stroke={Red} fill="none" strokeWidth="1.3" />
    <polygon points="606,207 648,238 606,238" fill="#000" />
    <path d="M606 206l48 32" stroke="#8a4a18" strokeWidth="3" strokeDasharray="1 1" />
    <path d="M606 241.5h60" stroke="#a84a10" strokeWidth="2" />
    <path d="M652.5 245V282" stroke="#b01010" strokeWidth="1.3" />
    <path d="M527.5 245V282" stroke="#b01010" strokeWidth="1.3" />
    <path d="M618 254h21M621 256h15v12h-15z" stroke={Cyan} fill="none" strokeWidth="1.2" />
    <rect x="622" y="258" width="13" height="8" fill="url(#glass)" stroke={Yellow} />
    {/* floor */}
    <rect x="524" y="279" width="131" height="4" fill="url(#bricks)" />
    <rect x="524" y="284" width="131" height="4" fill="#6a3410" />
    <path d="M572 280h35v3h-35zM573 283v10M606 283v10M575 287h30" stroke={Red} fill="none" />
    <path d="M484 293v-6h7v6M483 287h9M485 287v-5a2.5 2.5 0 015 0v5M507 293v-6h7v6M506 287h9M508 287v-5a2.5 2.5 0 015 0v5" stroke={Red} fill="none" />
    <path d="M514 292v-6h7v6M515 286v-5a2.5 2.5 0 015 0v5" stroke="#888" fill="none" />
    <rect x="492" y="289" width="14" height="3" fill={Teal} />
    <Plant x={672} y={281} s={1.1} />
    <path d="M669 290V293M677 290V293M680 288.5h20" stroke="#9a9a9a" fill="none" />
    <Gazebo x={757} y={250} />
    {/* grid lines and bubbles */}
    <path d="M459.5 262V311M526.5 294V311M533.5 261V311M574 261V311M604 261V311M652 261V311M797 262V311" stroke="#9a9a9a" fill="none" />
    {[[459, 'A'], [526, 'I'], [533, 'C'], [574, 'F'], [604, 'G'], [652, 'H'], [797, 'I']].map(([x, t]) => (
      <Bubble key={x} x={x} y={317} t={t} />
    ))}
    <Caption x={546} y={328} t="TAMPAK SAMPING KANAN" w={68} s="1 : 100" />
  </g>
);

const FrontView = () => (
  <g>
    <path d="M420 367V468M597 373V468M420 367h14M420 415h14M420 468h14M586 373h11M586 415h11M586 468h11" stroke={Teal} fill="none" />
    <path d="M434 415h12m3 0h3M566 415h14" stroke="#8a8a8a" fill="none" />
    <Mag x={420} y={367} /><Mag x={420} y={415} /><Mag x={420} y={468} />
    <Mag x={597} y={373} /><Mag x={597} y={415} /><Mag x={597} y={468} />
    <Level x={404} y={365} a="LISPLANK" b="+7.200" />
    <Level x={404} y={414} a="LT DUA" b="+3.400" />
    <Level x={396} y={467} a="LT DASAR" b="±0.000" />
    <Level x={598} y={372} a="LISPLANK" b="+7.200" />
    <Level x={598} y={414} a="LT DUA" b="+3.400" />
    <Level x={606} y={467} a="LT DASAR" b="±0.000" />
    <Tag x={418} y={392} t="3400" r /><Tag x={418} y={442} t="3400" r />
    <Tag x={595} y={394} t="3400" r /><Tag x={595} y={442} t="3400" r />
    {/* back roof */}
    <polygon points="485,335 522,335 537,348 510,368 500,368" fill="url(#planks)" />
    <path d="M537 346l37 22-3 4-8-2" fill="url(#shingle)" stroke="#909090" />
    {/* turret roof */}
    <polygon points="469,314 501,362 438,362" fill="url(#shingle)" stroke={Red} strokeWidth="1.3" />
    <path d="M469 314L454 362M469 314l16 48" stroke={Red} strokeWidth="1.3" />
    <path d="M438 362l5 5h53l5-5" fill="#2a0606" stroke={Red} />
    {/* right gable */}
    <polygon points="535,345 568,370 505,370" fill="url(#shingle)" stroke={Red} strokeWidth="1.3" />
    <path d="M505 370l3 3h56l4-3" fill="#2a0606" stroke={Red} />
    {/* tower */}
    <rect x="447" y="367" width="45" height="10" fill="url(#bricks)" />
    <path d="M447 368h44M447 377h44" stroke={Red} strokeWidth="1.3" />
    <rect x="447" y="377" width="45" height="29" fill="#3a1206" />
    {[[450, 9], [464, 11], [480, 9]].map(([x, w]) => (
      <g key={x}>
        <rect x={x - 1} y={379} width={w + 2} height={26} fill="none" stroke={Cyan} strokeWidth="1.3" />
        <rect x={x + 1} y={382} width={w - 2} height={20} fill="#0a0a0a" stroke={Yellow} strokeWidth="2" />
      </g>
    ))}
    <rect x="447" y="406" width="45" height="4" fill="#5a0a0a" stroke={Red} />
    <rect x="448" y="410" width="43" height="7" fill="url(#bricks)" stroke={Red} />
    <path d="M446 418h47" stroke={Red} strokeWidth="1.5" />
    <rect x="449" y="419" width="41" height="52" fill="url(#stone)" />
    <path d="M459 470V441a12 14 0 0124 0V470" fill="#5e3008" stroke="#d05a10" strokeWidth="1.5" />
    <path d="M462 470V441a9 11 0 0118 0V470z" fill="#8a8a8a" stroke="#c8c8c8" />
    <path d="M471 430V470M464 438h5v13h-5zM473 438h5v13h-5zM464 454h5v13h-5zM473 454h5v13h-5z" stroke="#222" fill="#2c2c2c" />
    {/* centre */}
    <rect x="492" y="368" width="24" height="102" fill="url(#planks)" />
    <rect x="497" y="385" width="14" height="7" fill="none" stroke="#d05a10" />
    <rect x="493" y="421" width="20" height="49" fill="#1a0a04" stroke="#a84a10" />
    <rect x="496" y="424" width="14" height="15" fill="url(#bricks)" />
    <rect x="499" y="441" width="8" height="22" fill="#0a0a0a" stroke="#c86a20" />
    {/* right bay */}
    <rect x="515" y="374" width="44" height="96" fill="#240804" />
    <path d="M516 378V416M555 378V416M516 425V468M555 425V468" stroke={Red} strokeWidth="2.5" />
    {[524, 539].map((x) => (
      <g key={x}>
        <path d={`M${x} 405V387a6.5 7 0 0113 0V405z`} fill="#050505" stroke={Yellow} strokeWidth="2" />
        <path d={`M${x - 2} 387a8.5 9 0 0117 0`} fill="none" stroke={Cyan} />
        <path d={`M${x} 435a6.5 6 0 0113 0V458H${x}z`} fill="#050505" stroke={Yellow} strokeWidth="2" />
        <path d={`M${x - 2} 434a8.5 8 0 0117 0V460H${x - 2}z`} fill="none" stroke={Cyan} />
      </g>
    ))}
    <path d="M514 415h50l-2 5h-46z" fill="#6a0a0a" stroke={Red} />
    <rect x="520" y="406" width="36" height="9" fill="url(#bricks)" stroke={Red} />
    <rect x="520" y="406" width="6" height="9" fill="#7a7a6a" stroke={Red} />
    <rect x="548" y="406" width="6" height="9" fill="#7a7a6a" stroke={Red} />
    <rect x="518" y="422" width="38" height="5" fill="url(#bricks)" />
    <path d="M516 463h42v8h-42z" fill="#4a0808" stroke={Red} />
    <rect x="558" y="375" width="7" height="90" fill="url(#shingle)" />
    <path d="M565 380h6M565 445h6" stroke="#999" />
    {/* columns at the front */}
    {[457, 486, 516].map((x) => (
      <path key={x} d={`M${x - 3} 471v-8h6v8M${x - 4} 463h8M${x - 2.5} 463v-6a2.5 2.5 0 015 0v6`} stroke={Cyan} fill="none" strokeWidth="1.2" />
    ))}
    <path d="M429 470v-6h3v6M589 470v-7h4v7" stroke={Red} fill="none" />
    <path d="M418 471.5H600" stroke={Cyan} strokeWidth="1.5" />
    <path d="M424 470.5h166" stroke={Lime} strokeWidth="1.5" strokeDasharray="2 1" />
    {/* dims */}
    <path d="M428 480H590M428 486.5H590M428 473V491M455 473V491M516 473V491M537 473V491M556 473V491M563 473V491M590 473V491" stroke={Teal} fill="none" />
    <Tag x={441} y={478} t="2500" /><Tag x={486} y={478} t="4500" /><Tag x={526} y={478} t="2500" /><Tag x={560} y={478} t="500" /><Tag x={576} y={478} t="2500" /><Tag x={509} y={484.5} t="12000" />
    {[[428, '1'], [455, '3'], [516, '4'], [537, '6'], [556, '7'], [563, '8'], [590, '9']].map(([x, t]) => (
      <Bubble key={x} x={x} y={496} t={t} />
    ))}
    <Caption x={451} y={504} t="TAMPAK DEPAN" w={44} s="1 : 100" />
  </g>
);

const TitleBlock = () => (
  <g>
    <path d="M830 130V515M830 140h81M830 198.5h81M830 210.5h81M830 297h81M891 302h20M830 305.5h81M830 368h81M830 394h81M830 399h81M830 410h81M830 434h81M830 439h81M830 449h81M830 454h81M830 466h81M830 482h81M830 492h81M830 498h81" stroke="#c8c8c8" fill="none" />
    <path d="M830 199h81M830 368h81M830 410h81" stroke="#8a8a8a" strokeWidth="1.5" fill="none" />
    <path d="M830 312h81M830 318h81M830 324h81M830 336h81M830 342h81M830 349h81M830 355h81M830 362h81" stroke="#6a6a6a" fill="none" />
    <path d="M835.5 297V367M891 297V367M897 302V367M904 302V367M857 434V449M883 434V449M871 454V466M871 492V515" stroke="#b8b8b8" fill="none" />
    <path d="M849.5 399V410M871 399V410M891 399V410" stroke="#b01010" fill="none" />
    <g fill={Yellow} fontSize="3.6" fontFamily="Liberation Sans" fontWeight="700">
      <text x="832" y="137">CATATAN</text>
      <text x="831" y="206" textLength="25">KETERANGAN</text>
      <text x="897" y="301">NOTE</text>
      <text x="831" y="304">NO</text>
      <text x="862" y="304">URAIAN</text>
      <text x="893" y="304">TGL</text>
      <text x="899" y="304">PAR</text>
      <text x="831" y="373">REVISI</text>
      <text x="835" y="398">TANGGAL</text>
      <text x="855" y="398">PERIKSA</text>
      <text x="876" y="398">SETUJU</text>
      <text x="896" y="398">GAMBAR</text>
      <text x="831" y="414">DIRENCANA OLEH</text>
      <text x="839" y="438">PEMILIK</text>
      <text x="865" y="438">GAMBAR</text>
      <text x="892" y="438">NOMOR</text>
      <text x="835" y="446">00-00-000</text>
      <text x="868" y="447">001</text>
      <text x="889" y="447">SATU STRIP</text>
      <text x="845" y="453">SKALA</text>
      <text x="885" y="453">LEMBAR</text>
      <text x="885" y="464">1 / 100</text>
      <text x="831" y="469">NAMA PROYEK</text>
      <text x="831" y="486">LOKASI PROYEK</text>
      <text x="831" y="496">FILE</text>
      <text x="873" y="496">KODE</text>
      <text x="831" y="501">RUMAH 2 LANTAI</text>
      <text x="873" y="501">00 - 0.00</text>
    </g>
    <path d="M836 432c3-5 7-10 11-6-1 3-5 5-7 5 3-1 6-3 8-1s4-1 6-3 5-8 5-10c0 5-3 12-7 14s-5 2-5-1" stroke={Yellow} strokeWidth="1.8" fill="none" />
    <g fill={Lime} fontSize="6.5" fontFamily="Liberation Sans" fontWeight="700">
      <text x="863" y="422" letterSpacing="2.5">ONA</text>
    </g>
    <rect x="863" y="423" width="39" height="9" fill="#70d890" stroke="#00a040" />
    <g fill={Lime} fontSize="3.8" fontFamily="Liberation Sans" fontWeight="700" textAnchor="middle">
      <text x="870" y="474">DESAIN GAMBAR RUMAH 2 LANTAI</text>
      <text x="870" y="479">TIPE B</text>
      <text x="870" y="490">TAMPAK DEPAN SAMPING KANAN</text>
    </g>
  </g>
);

const BackView = () => (
  <g>
    <path d="M1002 190V285M989 373V468M990 190h14M990 232h14M990 285h14M977 373h12M977 415h12M977 468h12" stroke={Teal} fill="none" />
    <path d="M1002 190.5H1142M1002 232.5H1142M1002 285.5H1150M989 415.5h36" stroke="#7a7a7a" strokeDasharray="26 6 4 6" fill="none" />
    <Mag x={1002} y={190} /><Mag x={1002} y={232} /><Mag x={1002} y={285} />
    <Mag x={989} y={373} /><Mag x={989} y={415} /><Mag x={989} y={468} />
    <Level x={986} y={189} a="LISPLANK" b="+6.800" />
    <Level x={986} y={231} a="LT DUA" b="+3.400" />
    <Level x={977} y={284} a="LT DASAR" b="±0.000" />
    <Level x={974} y={372} a="LISPLANK" b="+7.200" />
    <Level x={974} y={414} a="LT DUA" b="+3.400" />
    <Level x={966} y={467} a="LT DASAR" b="±0.000" />
    <Tag x={1000} y={211} t="3400" r /><Tag x={1000} y={258} t="3400" r />
    <Tag x={987} y={394} t="3400" r /><Tag x={987} y={442} t="3400" r />
    <path d="M984 289.5H1150" stroke={Blue} strokeWidth="2" />
    <path d="M1010 295H1150M1010 303H1150M1010 262V308" stroke={Teal} fill="none" />
    <Tag x={1091} y={297} t="6000" />
    <Bubble x={1010} y={314} t="1" />
    <Gazebo x={1011} y={246} />
    <Plant x={1134} y={277} s={1.1} />
    <path d="M1130 284V290M1138 284V290" stroke="#9a9a9a" />
    <path d="M1149 228l-11 8 3 4h8" fill="#400" stroke={Red} strokeWidth="1.3" />
    {/* roofs */}
    <polygon points="1117,314 1149,360 1149,368 1120,368 1102,335" fill="url(#shingle)" stroke="#bcbcbc" />
    <polygon points="1012,368 1050,335 1098,335 1138,368" fill="url(#shingle)" stroke="#bcbcbc" />
    <path d="M1013 368h136" stroke="#8a8a8a" strokeWidth="1.5" />
    <path d="M1013 370h131l-3 4h-124z" fill="#501206" stroke={Red} />
    <rect x="1018" y="374" width="123" height="4" fill="url(#bricks)" />
    <rect x="1026" y="381" width="111" height="41" fill="url(#shingle)" stroke="#aaaaaa" />
    <rect x="1137" y="378" width="12" height="60" fill="url(#shingle)" />
    <rect x="1028" y="423" width="112" height="6" fill="url(#bricks)" />
    <path d="M1022 378V470M1030 430V470M1136 430V470" stroke={Red} fill="none" />
    <path d="M1017 383h6v3h-6zM1017 442h6v3h-6z" stroke="#aaa" fill="#333" />
    <rect x="1050" y="431" width="63" height="38" fill="#120404" stroke={Red} strokeWidth="1.5" />
    <path d="M1052 434h58" stroke={Yellow} strokeWidth="1.5" />
    <path d="M1053 436h56" stroke="#a84a10" strokeWidth="2" />
    {[1061, 1071, 1082, 1092, 1103].map((x) => (
      <path key={x} d={`M${x} 435V467`} stroke={Yellow} strokeWidth="2" />
    ))}
    <path d="M1064 440h5v27h-5zM1074 440h6v27h-6zM1085 440h5v27h-5zM1095 440h5v27h-5z" fill="none" stroke="#b8601a" />
    <path d="M1020 460h30" stroke={Red} strokeWidth="1.5" />
    <rect x="1020" y="461" width="10" height="9" fill="none" stroke="#aaa" />
    <Plant x={1054} y={460} s={1.5} />
    <Plant x={1110} y={461} s={1.5} />
    <path d="M990 472H1150" stroke={Blue} strokeWidth="1.8" />
    <path d="M997 480H1150M997 486.5H1150M997 474V491M1023 474V491M1031 474V491M1071 474V491M1091 474V491M1132 474V491" stroke={Teal} fill="none" />
    <Tag x={1010} y={478} t="2500" /><Tag x={1027} y={478} t="500" /><Tag x={1042} y={478} t="2500" /><Tag x={1081} y={478} t="1500" /><Tag x={1112} y={478} t="2500" /><Tag x={1078} y={484.5} t="12000" /><Tag x={1144} y={478} t="1200" />
    {[[997, '9'], [1023, '8'], [1031, '7'], [1050, '6'], [1071, '5'], [1091, '4'], [1132, '3']].map(([x, t]) => (
      <Bubble key={x} x={x} y={496} t={t} />
    ))}
    <Caption x={1015} y={504} t="TAMPAK BELAKANG" w={49} s="1 : 100" />
  </g>
);

const Drawing = () => (
  <DrawingSvg width="1017" height="408" viewBox="132 119 1017 408">
    <defs>
      <pattern id="shingle" width="4" height="3" patternUnits="userSpaceOnUse">
        <rect width="4" height="3" fill="#1c1c1c" />
        <path d="M0 1h3M2 2.5h2M0 2.5h1" stroke="#8c8c8c" strokeWidth=".9" />
      </pattern>
      <pattern id="planks" width="5" height="3" patternUnits="userSpaceOnUse">
        <rect width="5" height="3" fill="#1a0a02" />
        <path d="M0 1h5" stroke="#b0561c" strokeWidth="1.4" />
      </pattern>
      <pattern id="bricks" width="3" height="3" patternUnits="userSpaceOnUse">
        <rect width="3" height="3" fill="#301004" />
        <path d="M0 1h2M1 2.5h2" stroke="#c8641c" />
      </pattern>
      <pattern id="stone" width="4" height="4" patternUnits="userSpaceOnUse">
        <rect width="4" height="4" fill="#201c1c" />
        <path d="M0 1h3M2 3h2" stroke="#8a8080" />
      </pattern>
      <pattern id="glass" width="7" height="7" patternUnits="userSpaceOnUse">
        <rect width="7" height="7" fill="#060606" />
        <path d="M0 .5h7M.5 0v7" stroke="#a05a18" />
        <path d="M3 4.5l2-2" stroke="#888" />
      </pattern>
    </defs>
    <rect x="373.5" y="130.5" width="538" height="385" fill="none" stroke={Blue} strokeWidth="1.5" />
    <rect x="938.5" y="130.5" width="300" height="385" fill="none" stroke={Blue} strokeWidth="1.5" />
    <SideView />
    <FrontView />
    <TitleBlock />
    <BackView />
    <path d="M1051.5 119V527" stroke="#c4c4c4" />
    <circle cx="1051.5" cy="526" r="2.5" fill="#000" stroke="#c4c4c4" />
  </DrawingSvg>
);

const leftDraw = ['line', 'xline', 'pline', 'polygon', 'rect', 'arc', 'circle', 'cloud', 'spline', 'ellipse', 'ellArc', 'insert', 'block', 'point', 'hatch', 'gradient', 'region', 'table', 'mtext'];
const leftDim = ['dimLin', 'dimAli', 'dimArc', 'dimOrd', '|', 'dimRad', 'dimJog', 'dimDia', 'dimAng', '|', 'dimQuick', 'dimBase', 'dimCont', 'dimSpace', 'dimBreak', '|', 'dimTol', 'dimCen', 'dimChk', 'dimZig', '|', 'dimTxt', 'dimPen', 'dimUpd', '|', 'dimEdit'];
const rightModify = ['erase', 'copyObj', 'mirror', 'offset', 'array', 'move', 'rotate', 'scale', 'stretch', 'trim', 'extend', 'breakPt', 'breakOne', 'join', 'chamfer', 'fillet', 'explode'];
const rightOrder = ['order1', 'order2', 'order3', 'order4'];
const menus = ['File', 'Edit', 'View', 'Insert', 'Format', 'Tools', 'Draw', 'Dimension', 'Modify', 'Express', 'Window', 'Help', 'My Special'];
const statusBtns = [
  ['SNAP', 23, 7], ['GRID', 21, 6], ['ORTHO', 33, 5], ['POLAR', 30, 4], ['OSNAP', 34, 3, true],
  ['OTRACK', 37, 6], ['DUCS', 23, 7], ['DYN', 19, 6], ['LWT', 20, 5], ['MODEL', 32, 0, true],
];

export default function App() {
  return (
    <Page>
      <GlobalStyle />
      <Window>
        <TitleBar>
          <Glyph $s={12} viewBox="0 0 12 12">
            <rect width="12" height="12" fill="#cfe0d8" />
            <path d="M1 11L5 1h2l4 10M3 7h6" stroke="#1f6f5a" strokeWidth="1.5" fill="none" />
          </Glyph>
          <TitleText>{'AutoCAD 2007 - [C:\\Users\\Asus\\Downloads\\AUTOCAD\\RUMAH 2 Lt\\Kumpulan Desain Rumah 2 Lantai\\struktur TYPE b PRARENCANA 13-05-08.zip.dwg]'}</TitleText>
          <WinControls>
            <Glyph $s={11} viewBox="0 0 11 11"><path d="M1 5.5h9" stroke="#fff" /></Glyph>
            <Glyph $s={11} viewBox="0 0 11 11"><path d="M1.5 3.5h6v6h-6zM3.5 3.5v-2h6v6h-2" stroke="#fff" fill="none" /></Glyph>
            <Glyph $s={11} viewBox="0 0 11 11"><path d="M1 1l9 9M10 1l-9 9" stroke="#fff" /></Glyph>
          </WinControls>
        </TitleBar>
        <MenuBar>
          <Glyph $s={13} viewBox="0 0 13 13">
            <path d="M3 3h6l3 9H1z" fill="#f4d040" stroke="#8a6a10" />
            <rect x="3" y="0" width="6" height="5" fill="#20405e" />
          </Glyph>
          <MenuItems>
            {menus.map((m) => <span key={m}>{m}</span>)}
          </MenuItems>
          <MdiButtons>
            <MdiButton><Glyph $s={9} viewBox="0 0 9 9"><path d="M1 7h6" stroke="#333" strokeWidth="1.5" /></Glyph></MdiButton>
            <MdiButton><Glyph $s={9} viewBox="0 0 9 9"><path d="M1 3.5h5v5H1zM3 3V1h5v5H6" stroke="#555" fill="none" /></Glyph></MdiButton>
            <MdiButton><Glyph $s={9} viewBox="0 0 9 9"><path d="M1 1l7 7M8 1L1 8" stroke="#333" strokeWidth="1.3" /></Glyph></MdiButton>
          </MdiButtons>
        </MenuBar>

        <ToolRow $h={24}>
          <ToolGroup $pl={0}>
            <Sep />
            <Tools list={['newdoc', 'open', 'save', 'plotx', '|', 'print', 'preview', '|', 'cut', 'copy', 'paste', 'brush', '|', 'undo']} />
            <DropSlot>▼</DropSlot>
            <Tool n="redo" />
            <DropSlot $off>▼</DropSlot>
            <Tools list={['|', 'pan', 'zoomrt', 'zoomwin', '|', 'props', 'help']} />
          </ToolGroup>
          <ToolGroup $pl={0} $pr={2}>
            <Handle $m={3} />
            <Tool n="textA" />
            <Combo w={80} m={1}>
              <ComboLabel>STANDARD</ComboLabel>
            </Combo>
            <Sep $m={0} />
            <Tool n="dimStyle" />
            <Combo w={80} m={1}>
              <ComboLabel>18-DIM100-DOT</ComboLabel>
            </Combo>
            <Sep />
            <Tool n="layerPrev" />
            <Combo w={240}>
              <LayerStates />
              <Swatch />
              <ComboLabel $ml={2}>HAT</ComboLabel>
            </Combo>
          </ToolGroup>
          <ToolGroup $pl={0} $pr={2} $ml={4}>
            <Handle />
            <Tools list={['redLine', '|', 'redX']} />
          </ToolGroup>
          <ToolGroup $pl={0} $pr={2}>
            <Handle />
            <Tools list={['ucs', 'stair', 'abc', 'zoomDoc', 'colorDoc', 'transfer', 'tape', 'textA']} />
          </ToolGroup>
        </ToolRow>

        <ToolRow>
          <ToolGroup $pl={5} $pr={3}>
            <Tool n="layers" />
            <Combo w={236} m={3}>
              <LayerStates w={46} />
              <Swatch />
              <ComboLabel $ml={2}>HAT</ComboLabel>
            </Combo>
            <Tools list={['layerY', 'layers', 'layerState']} />
          </ToolGroup>
          <ToolGroup $pl={0} $pr={1}>
            <Handle $m={2} />
            <Combo w={121} m={1}>
              <Swatch />
              <ComboLabel>ByLayer</ComboLabel>
            </Combo>
            <Handle $m={0} />
            <Combo w={128} m={1}>
              <LineSample $w={48} />
              <ComboLabel>ByLayer</ComboLabel>
            </Combo>
            <Handle $m={0} />
            <Combo w={100} m={1}>
              <LineSample $w={32} />
              <ComboLabel>ByLayer</ComboLabel>
            </Combo>
            <Handle $m={0} />
            <Combo w={98} m={1} off>
              <ComboLabel $ml={5}>ByColor</ComboLabel>
            </Combo>
          </ToolGroup>
          <ToolGroup $pl={0} $pr={3}>
            <Handle />
            <Tools list={['layerBall', 'layerBulb', 'layerGear', 'layerSun', 'layerFwd', 'layerBack', 'layerLock', 'layerOpen', '|', 'zoomPan', 'broom', 'match']} />
          </ToolGroup>
        </ToolRow>

        <ToolRow>
          <ToolGroup $pl={4} $pr={4}>
            <Combo w={141}>
              <ComboLabel $ml={3}>MOCH TAUFIQ</ComboLabel>
            </Combo>
            <Tools list={['regenGear', 'house', '|', 'shade1', 'shade2']} />
          </ToolGroup>
        </ToolRow>

        <Workspace>
          <DockColumn $w={15} $mr={3}>
            <VertGroup $pr={2}>
              <VertHandle />
              <VTools list={leftDraw} />
            </VertGroup>
          </DockColumn>
          <DockColumn $w={20}>
            <VertGroup $pr={2}>
              <VertHandle />
              <VTools list={leftDim} />
            </VertGroup>
            <VertHandle $h={8} />
          </DockColumn>
          <Center>
            <ViewRow>
              <Canvas>
                <Drawing />
              </Canvas>
              <VScroll>
                <Chevron c="#222" r={180} />
                <VThumbWrap>
                  <VThumb />
                </VThumbWrap>
                <Chevron c="#222" />
              </VScroll>
            </ViewRow>
            <TabRow>
              <NavBtn><Glyph $s={9} viewBox="0 0 9 9"><path d="M7 1L3 4.5 7 8zM1.5 1v7" fill="#111" stroke="#111" /></Glyph></NavBtn>
              <NavBtn><Glyph $s={9} viewBox="0 0 9 9"><path d="M7 1L2 4.5 7 8z" fill="#111" /></Glyph></NavBtn>
              <NavBtn><Glyph $s={9} viewBox="0 0 9 9"><path d="M2 1l5 3.5L2 8z" fill="#111" /></Glyph></NavBtn>
              <NavBtn><Glyph $s={9} viewBox="0 0 9 9"><path d="M2 1l4 3.5L2 8zM7.5 1v7" fill="#111" stroke="#111" /></Glyph></NavBtn>
              <Tab $on $w={34} $ml={3}><TabFace $on>Model</TabFace></Tab>
              <Tab $w={40}><TabFace>Layout1</TabFace></Tab>
              <HScroll>
                <HGrip />
                <HTrack>
                  <Chevron c="#222" r={90} />
                  <HThumb />
                  <Chevron c="#222" r={-90} />
                </HTrack>
              </HScroll>
            </TabRow>
          </Center>
          <DockColumn $w={16} $ml={1}>
            <VertGroup>
              <VertHandle />
              <VTools list={rightModify} />
            </VertGroup>
            <VertGroup>
              <VertHandle $h={9} />
              <VTools list={rightOrder} />
            </VertGroup>
          </DockColumn>
        </Workspace>

        <CommandPanel>
          <CommandGrip />
          <CommandArea>Command:</CommandArea>
        </CommandPanel>

        <StatusBar>
          <Coords>186082.366, 5745.162 , 0.000</Coords>
          {statusBtns.map(([t, w, mr, on]) => (
            <StatusBtn key={t} $w={w} $mr={mr} $on={on}>{t}</StatusBtn>
          ))}
          <Tray>
            <TrayIcons>
              <Glyph $s={13} viewBox="0 0 13 13"><circle cx="6.5" cy="6.5" r="4.5" fill="#bcd3ea" stroke={N} /><path d="M3 3l7 7" stroke={N} strokeWidth="1.5" /></Glyph>
              <Glyph $s={13} viewBox="0 0 13 13"><rect x="2" y="6" width="7" height="7" fill="#d8a820" stroke="#6a5210" /><path d="M4 6V3c0-3 5-3 5 0" fill="none" stroke="#555" strokeWidth="1.5" /></Glyph>
              <Glyph $s={13} viewBox="0 0 13 13"><rect x="1" y="1" width="7" height="11" fill="#6b96c4" stroke={N} /><circle cx="9" cy="9" r="3.5" fill="#2bb03c" /></Glyph>
            </TrayIcons>
            <DropSlot>▼</DropSlot>
            <Glyph $s={14} viewBox="0 0 14 14"><rect x=".5" y=".5" width="13" height="13" fill="#bcd3ea" stroke="#6f8fb0" /><rect x="3" y="3" width="8" height="8" fill="#dbe8f4" /></Glyph>
          </Tray>
        </StatusBar>
      </Window>
      <Headline>GAMBAR RUMAH 2 LT TIPE KLASIK</Headline>
    </Page>
  );
}
